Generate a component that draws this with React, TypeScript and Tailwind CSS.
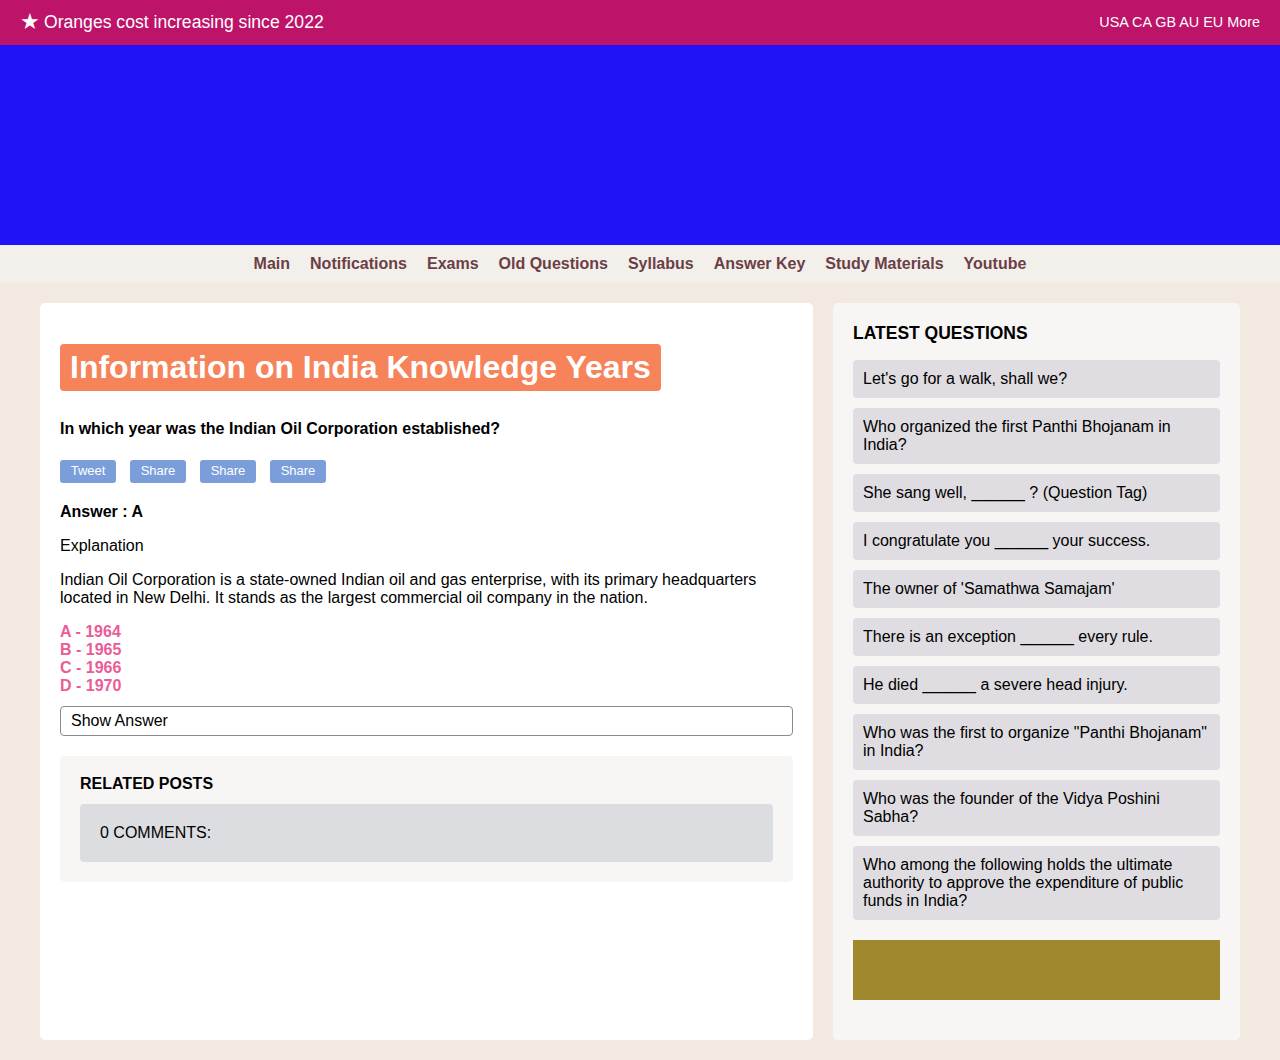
const navItems = ["Main", "Notifications", "Exams", "Old Questions", "Syllabus", "Answer Key", "Study Materials", "Youtube"];

const latest = [
  "Let's go for a walk, shall we?",
  "Who organized the first Panthi Bhojanam in India?",
  "She sang well, ______ ? (Question Tag)",
  "I congratulate you ______ your success.",
  "The owner of 'Samathwa Samajam'",
  "There is an exception ______ every rule.",
  "He died ______ a severe head injury.",
  'Who was the first to organize "Panthi Bhojanam" in India?',
  "Who was the founder of the Vidya Poshini Sabha?",
  "Who among the following holds the ultimate authority to approve the expenditure of public funds in India?",
];

const options = ["A - 1964", "B - 1965", "C - 1966", "D - 1970"];

export default function App() {
  return (
    <div className="min-h-[1060px] bg-[#f2eae1] font-['Liberation_Sans',Arial,sans-serif] text-black leading-[1.15]">
      {/* top strip */}
      <div className="h-[45px] bg-[#bd1369] text-white flex items-center justify-between px-5">
        <div className="text-[17.6px] flex items-center">
          <span className="text-[22px] leading-none mr-[4px] -mt-[2px]">★</span>
          Oranges cost increasing since 2022
        </div>
        <div className="text-[14.4px]">USA CA GB AU EU More</div>
      </div>

      {/* banner */}
      <div className="h-[200px] bg-[#2013f8]" />

      {/* nav */}
      <nav className="h-[38px] bg-[#f3efeb] flex items-center justify-center gap-5">
        {navItems.map((n) => (
          <a key={n} className="text-[16px] font-bold text-[#6b3f46]">
            {n}
          </a>
        ))}
      </nav>

      <div className="flex gap-5 px-10 pt-5 pb-5">
        {/* main post */}
        <main className="w-[773px] bg-white rounded-[5px] p-5">
          <h1 className="mt-[21px] inline-block bg-[#f7835a] text-white text-[32px] font-bold px-[10px] py-[5px] rounded-[4px] leading-[37px]">
            Information on India Knowledge Years
          </h1>

          <p className="mt-[29px] font-bold text-[16px] leading-[18px]">
            In which year was the Indian Oil Corporation established?
          </p>

          <div className="mt-[22px] flex gap-[14px]">
            {["Tweet", "Share", "Share", "Share"].map((b, i) => (
              <button key={i} className="w-[56px] h-[23px] bg-[#7b9edb] text-white text-[13px] rounded-[3px]">
                {b}
              </button>
            ))}
          </div>

          <p className="mt-[20px] font-bold text-[16px] leading-[18px]">Answer : A</p>
          <p className="mt-[16px] text-[16px] leading-[18px]">Explanation</p>
          <p className="mt-[16px] text-[16px] leading-[18px]">
            Indian Oil Corporation is a state-owned Indian oil and gas enterprise, with its primary headquarters located in New Delhi. It stands as the largest commercial oil company in the nation.
          </p>

          <div className="mt-[16px] text-[#ec5b97] font-bold text-[16px] leading-[18px]">
            {options.map((o) => (
              <div key={o}>{o}</div>
            ))}
          </div>

          <div className="mt-[11px] h-[30px] border border-[#8a8a8a] rounded-[4px] flex items-center px-[10px] text-[16px]">
            Show Answer
          </div>

          <section className="mt-5 bg-[#f7f6f4] rounded-[5px] p-5">
            <h3 className="font-bold text-[16px] leading-[18px] mt-[-1px]">RELATED POSTS</h3>
            <div className="mt-[11px] bg-[#dcdde0] rounded-[4px] h-[58px] px-5 flex items-center text-[16px]">
              0 COMMENTS:
            </div>
          </section>
        </main>

        {/* sidebar */}
        <aside className="w-[407px] bg-[#f7f6f4] rounded-[5px] p-5">
          <h2 className="font-bold text-[17.5px] leading-[20px]">LATEST QUESTIONS</h2>
          <div className="mt-[17px] flex flex-col gap-[10px]">
            {latest.map((q) => (
              <div key={q} className="bg-[#dfdde1] rounded-[4px] p-[10px] text-[16px] leading-[18px]">
                {q}
              </div>
            ))}
          </div>
          <div className="mt-[20px] mb-5 h-[60px] bg-[#a0882f]" />
        </aside>
      </div>
    </div>
  );
}
